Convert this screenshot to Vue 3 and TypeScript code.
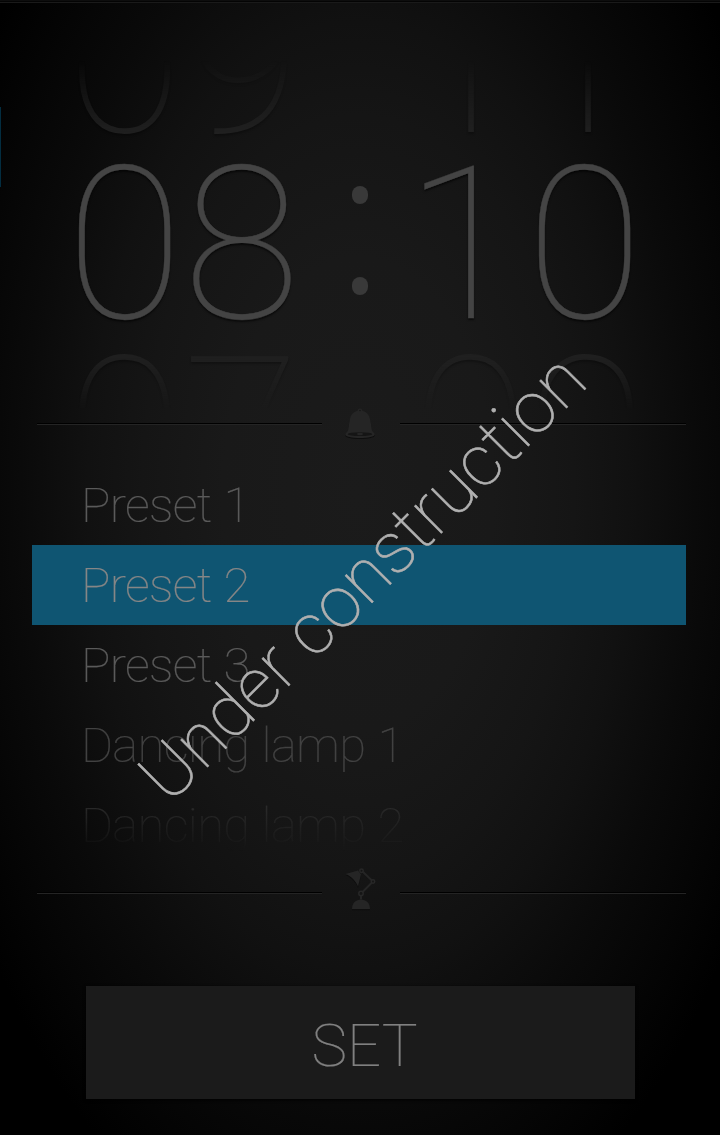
<script setup lang="ts">
interface DigitRow {
  state: 'previous' | 'current' | 'next'
  hours: string[]
  minutes: string[]
}

interface Preset {
  name: string
  level: string
}

const rows: DigitRow[] = [
  { state: 'previous', hours: ['0', '9'], minutes: ['1', '1'] },
  { state: 'current', hours: ['0', '8'], minutes: ['1', '0'] },
  { state: 'next', hours: ['0', '7'], minutes: ['0', '9'] },
]

const presets: Preset[] = [
  { name: 'Preset 1', level: 'near' },
  { name: 'Preset 2', level: 'selected' },
  { name: 'Preset 3', level: 'near' },
  { name: 'Dancing lamp 1', level: 'far' },
  { name: 'Dancing lamp 2', level: 'fading' },
]
</script>

<template>
  <main class="screen">
    <section class="clock">
      <div class="wheel">
        <div v-for="row in rows" :key="row.state" class="row" :class="row.state">
          <div class="pair">
            <span v-for="(d, i) in row.hours" :key="i" class="digit">{{ d }}</span>
          </div>
          <div class="colon">
            <template v-if="row.state === 'current'">
              <i class="dot"></i>
              <i class="dot"></i>
            </template>
          </div>
          <div class="pair minutes">
            <span v-for="(d, i) in row.minutes" :key="i" class="digit" :class="{ one: d === '1' }">{{ d }}</span>
          </div>
        </div>
      </div>
    </section>

    <div class="divider">
      <span class="rule"></span>
      <svg class="bell" width="32" height="32" viewBox="0 0 32 32">
        <path class="shade" d="M16 1.6c1.6 0 2.4 1 2.5 2.2 5.2 1.4 7.3 5.2 8 10.200l1.500 9.500c.4 1.600 2.700 2.300 2.700 4 0 2.300-6.500 3.500-14.700 3.500S1.300 29.800 1.300 27.500c0-1.700 2.300-2.400 2.700-4L5.500 14c.7-5 2.800-8.800 8-10.200.1-1.200.9-2.200 2.500-2.200z" />
        <path class="icon" d="M16 .6c1.600 0 2.400 1 2.500 2.200 5.200 1.400 7.300 5.200 8 10.200l1.500 9.500c.4 1.600 2.700 2.300 2.700 4 0 2.300-6.500 3.500-14.700 3.500S1.300 28.800 1.300 26.500c0-1.700 2.300-2.400 2.700-4L5.500 13c.7-5 2.800-8.800 8-10.200C13.600 1.600 14.400.6 16 .6z" />
        <ellipse class="hollow" cx="16" cy="26.200" rx="12.200" ry="1.900" />
        <ellipse class="icon" cx="16" cy="26" rx="3" ry="1.200" />
        <circle class="hollow" cx="16" cy="2.500" r=".8" />
      </svg>
      <span class="rule"></span>
    </div>

    <ul class="presets">
      <li v-for="p in presets" :key="p.name" class="preset" :class="p.level">
        <span class="name">{{ p.name }}</span>
      </li>
    </ul>

    <div class="divider lamp-divider">
      <span class="rule"></span>
      <svg class="lamp" width="34" height="44" viewBox="0 0 34 44">
        <g class="shade" transform="translate(0 1.200)">
          <path d="M1.500 6 14 2.500 17 6.500 14 18.500C11.500 12.500 7 8 1.500 6z" />
          <path d="M8 41c0-6 4-9.500 9-9.500s9 3.500 9 9.500z" />
        </g>
        <path class="arm" d="M17.500 2.500 29 13.500 17 25.500v6" />
        <path class="icon" d="M1.500 6 14 2.500 17 6.500 14 18.500C11.500 12.500 7 8 1.500 6z" />
        <path class="icon" d="M8 41c0-6 4-9.500 9-9.500s9 3.500 9 9.500z" />
        <circle class="joint" cx="17.500" cy="2.700" r="1.700" />
        <circle class="joint" cx="29" cy="13.500" r="1.700" />
        <circle class="joint" cx="17" cy="25.500" r="2.200" />
      </svg>
      <span class="rule"></span>
    </div>

    <button class="set" type="button">SET</button>

    <div class="edge-marker"></div>
    <div class="banner">Under construction</div>
  </main>
</template>

<style>
html,
body {
  background: #000;
}
</style>

<style scoped>
.screen {
  position: relative;
  box-sizing: border-box;
  width: 720px;
  height: 1135px;
  overflow: hidden;
  display: flex;
  flex-direction: column;
  font-family: Roboto, 'Liberation Sans', sans-serif;
  font-weight: 100;
  background:
    linear-gradient(#0d0d0d 0 1px, #040404 1px 2px, #1a1a1a 2px 3px, transparent 3px),
    radial-gradient(ellipse 450px 790px at 358px 495px, #1b1b1b 0%, #191919 30%, #151515 48%, #111 60%, #0a0a0a 75%, #060606 85%, #000 100%);
}

.clock {
  height: 408px;
  overflow: hidden;
  flex: none;
}

.wheel {
  margin-top: -37px;
}

.row {
  display: flex;
  height: 188px;
  padding-left: 66px;
  font-size: 214px;
  line-height: 187px;
}

.pair {
  display: flex;
  width: 234px;
}

.minutes {
  margin-left: -11px;
}

.digit {
  width: 117px;
  display: flex;
  justify-content: center;
}

.one {
  width: 109px;
  padding-right: 8px;
}

.colon {
  width: 120px;
  box-sizing: border-box;
  padding: 35px 0 0 0;
  display: flex;
  flex-direction: column;
  align-items: center;
  gap: 73px;
}

.dot {
  width: 16px;
  height: 18px;
  border-radius: 8px;
  background: #393939;
}

.current {
  color: #444;
  -webkit-text-stroke: 0.4px #444;
  text-shadow: 0 2px 2px rgba(0, 0, 0, 0.6);
}

.previous,
.next {
  color: #222;
  line-height: 192px;
  text-shadow: 0 2px 2px rgba(0, 0, 0, 0.3);
}

.previous {
  mask-image: linear-gradient(transparent 98px, #000 180px);
}

.next {
  color: #202020;
  mask-image: linear-gradient(#000 15px, transparent 72px);
}

.next .minutes {
  margin-left: -8px;
}

.divider {
  flex: none;
  height: 32px;
  margin: 0 34px 0 37px;
  display: flex;
  align-items: center;
}

.rule {
  flex: none;
  width: 286px;
  height: 1px;
  background: #000;
  border-bottom: 1px solid #242424;
}

.divider .rule:first-child {
  width: 285px;
}

.bell {
  flex: none;
  margin: 0 24px 0 22px;
}

.lamp {
  flex: none;
  margin: 0 22px 7px;
}

.icon {
  fill: #252525;
}

.shade {
  fill: #0e0e0e;
}

.hollow {
  fill: #151515;
}

.arm {
  fill: none;
  stroke: #252525;
  stroke-width: 2;
}

.joint {
  fill: #151515;
  stroke: #272727;
  stroke-width: 1.5;
}

.presets {
  list-style: none;
  margin: 25px 34px 0 32px;
  padding: 0;
  flex: none;
}

.preset {
  height: 80px;
  padding-left: 49px;
  box-sizing: border-box;
  font-size: 49px;
  line-height: 81px;
  letter-spacing: -0.7px;
  word-spacing: 1px;
  white-space: nowrap;
  -webkit-text-stroke: 0.2px currentColor;
}

.near {
  color: #5a5a5a;
}

.far {
  color: #424242;
}

.selected {
  background: #0f5572;
  color: #868686;
}

.fading {
  color: #2b2b2b;
  mask-image: linear-gradient(#000 20px, transparent 66px);
}

.lamp-divider {
  height: 44px;
  margin-top: 6px;
}

.set {
  flex: none;
  width: 549px;
  height: 113px;
  margin: 71px 0 0 86px;
  padding: 6px 0 0 8px;
  border: 0;
  background: #1b1b1b;
  box-shadow: 0 1px 3px #000;
  color: #808080;
  font-family: inherit;
  font-weight: 100;
  font-size: 60px;
  -webkit-text-stroke: 0.2px currentColor;
}

.edge-marker {
  position: absolute;
  left: 0;
  top: 107px;
  width: 1px;
  height: 80px;
  background: #032d40;
}

.banner {
  position: absolute;
  left: 170px;
  top: 741px;
  line-height: 80px;
  font-size: 72px;
  color: #b0b0b0;
  white-space: nowrap;
  -webkit-text-stroke: 0.6px #b0b0b0;
  transform-origin: 0 65px;
  transform: rotate(-45deg);
}
</style>
